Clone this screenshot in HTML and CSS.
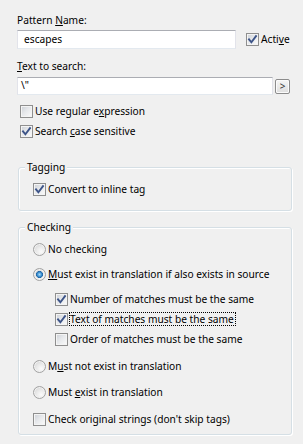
FILE: index.html
```html
<!DOCTYPE html>
<html>
<head>
<meta charset="utf-8">
<link rel="stylesheet" href="styles.css">
</head>
<body>
<div class="page">
  <div class="lbl lbl-first">Pattern <u>N</u>ame:</div>
  <div class="row-input">
    <div class="edit edit-name">escapes</div>
    <div class="chk chk-active"><span class="cb on"><svg viewBox="0 0 13 13"><path d="M3 6.3 L5.4 9.3 L10 3.2"/></svg></span><span class="txt">Acti<u>v</u>e</span></div>
  </div>
  <div class="lbl lbl-second"><u>T</u>ext to search:</div>
  <div class="row-input">
    <div class="edit edit-search">\"</div>
    <div class="btn">&gt;</div>
  </div>
  <div class="chk top-chk first"><span class="cb"></span><span class="txt">Use regular e<u>x</u>pression</span></div>
  <div class="chk top-chk"><span class="cb on"><svg viewBox="0 0 13 13"><path d="M3 6.3 L5.4 9.3 L10 3.2"/></svg></span><span class="txt">Search <u>c</u>ase sensitive</span></div>

  <div class="group group-tag">
    <div class="legend">Tagging</div>
    <div class="chk item g5"><span class="cb on"><svg viewBox="0 0 13 13"><path d="M3 6.3 L5.4 9.3 L10 3.2"/></svg></span><span class="txt">Convert to inline tag</span></div>
  </div>

  <div class="group group-check">
    <div class="legend">Checking</div>
    <div class="chk item g5"><span class="rb"></span><span class="txt">No checking</span></div>
    <div class="chk item g5"><span class="rb on"></span><span class="txt"><u>M</u>ust exist in translation if also exists in source</span></div>
    <div class="chk item sub g5"><span class="cb on"><svg viewBox="0 0 13 13"><path d="M3 6.3 L5.4 9.3 L10 3.2"/></svg></span><span class="txt">Number of matches must be the same</span></div>
    <div class="chk item sub"><span class="cb on"><svg viewBox="0 0 13 13"><path d="M3 6.3 L5.4 9.3 L10 3.2"/></svg></span><span class="txt focus">Text of matches must be the same</span></div>
    <div class="chk item sub"><span class="cb"></span><span class="txt">Order of matches must be the same</span></div>
    <div class="chk item g7"><span class="rb"></span><span class="txt">M<u>u</u>st not exist in translation</span></div>
    <div class="chk item g6"><span class="rb"></span><span class="txt">Must <u>e</u>xist in translation</span></div>
    <div class="chk item g7"><span class="cb"></span><span class="txt">Check original strings (don't skip tags)</span></div>
  </div>
</div>
</body>
</html>
```

FILE: styles.css
```css
html, body {
  margin: 0;
  padding: 0;
  background: #f0f0f0;
}
body {
  font-family: "Noto Sans", "Open Sans", sans-serif;
  font-size: 10.2px;
  color: #000;
}
.page {
  width: 303px;
  height: 444px;
  box-sizing: border-box;
  padding: 13px 0 0 17px;
}
u { text-decoration: underline; text-underline-offset: 1px; }
.lbl {
  line-height: 15px;
  height: 15px;
  white-space: nowrap;
}
.lbl-first { margin-bottom: 1px; }
.lbl-second { margin-top: 10px; margin-bottom: 3px; }
.row-input {
  display: flex;
  align-items: center;
}
.edit {
  box-sizing: border-box;
  background: #fff;
  border: 1px solid #e2e3ea;
  border-top-color: #abadb3;
  border-bottom-color: #e3e9ef;
  line-height: 15px;
  white-space: nowrap;
}
.edit-name {
  width: 219px;
  height: 19px;
  padding: 1px 0 0 6px;
}
.edit-search {
  width: 256px;
  height: 18px;
  padding: 0 0 0 3px;
}
.btn {
  box-sizing: border-box;
  width: 15px;
  height: 15px;
  margin-left: 2px;
  border: 1px solid #8c8c8c;
  border-radius: 2px;
  background: linear-gradient(#f6f6f6, #dedede);
  box-shadow: inset 0 0 0 1px #fbfbfb;
  font-size: 10px;
  line-height: 12px;
  text-align: center;
  color: #333;
}
.chk {
  display: flex;
  align-items: center;
  height: 20px;
  white-space: nowrap;
}
.chk-active { margin-left: 10px; }
.top-chk { margin-left: 3px; }
.top-chk.first { margin-top: 6px; }
.txt { margin-left: 2px; line-height: 15px; }
.cb {
  position: relative;
  flex: none;
  box-sizing: border-box;
  width: 13px;
  height: 13px;
  border: 1px solid #8f8f8f;
  background: linear-gradient(135deg, #cbcfd5 0%, #e6e8eb 45%, #fbfbfb 100%);
  box-shadow: inset 0 0 0 1px #f4f4f4;
}
.cb svg {
  position: absolute;
  left: -1px;
  top: -1px;
  width: 13px;
  height: 13px;
}
.cb svg path {
  fill: none;
  stroke: #3d5488;
  stroke-width: 1.9;
  stroke-linecap: square;
}
.rb {
  flex: none;
  box-sizing: border-box;
  width: 13px;
  height: 13px;
  border-radius: 50%;
  border: 1px solid #a2a2a2;
  background: radial-gradient(circle at 65% 70%, #fbfbfb 0%, #e9e9e9 45%, #cdcdcd 100%);
  box-shadow: inset 0 0 0 1px #f2f2f2;
}
.rb.on {
  background:
    radial-gradient(circle at 50% 50%, #a9dbf9 0%, #3b8fd0 28%, #1c5b98 45%, transparent 47%),
    radial-gradient(circle at 65% 70%, #fbfbfb 0%, #e9e9e9 45%, #cdcdcd 100%);
}
.group {
  box-sizing: border-box;
  width: 274px;
  margin-left: 1px;
  border: 1px solid #d5dfe5;
  border-radius: 3px;
  box-shadow: inset 1px 1px 0 #fff, 1px 1px 0 #fff;
  padding: 0 0 5px 14px;
}
.legend {
  width: fit-content;
  margin: -8px 0 0 -8px;
  padding: 0 2px;
  line-height: 14px;
  height: 14px;
  background: #f0f0f0;
}
.group-tag { margin-top: 26px; padding-bottom: 11px; }
.group-check { margin-top: 16px; }
.sub { margin-left: 22px; }
.g5 { margin-top: 5px; }
.g6 { margin-top: 6px; }
.g7 { margin-top: 7px; }
.focus {
  outline: 1px dotted #000;
  outline-offset: 0;
  padding: 0 1px 0 0;
  line-height: 12px;
  margin-left: 2px;
}
```
